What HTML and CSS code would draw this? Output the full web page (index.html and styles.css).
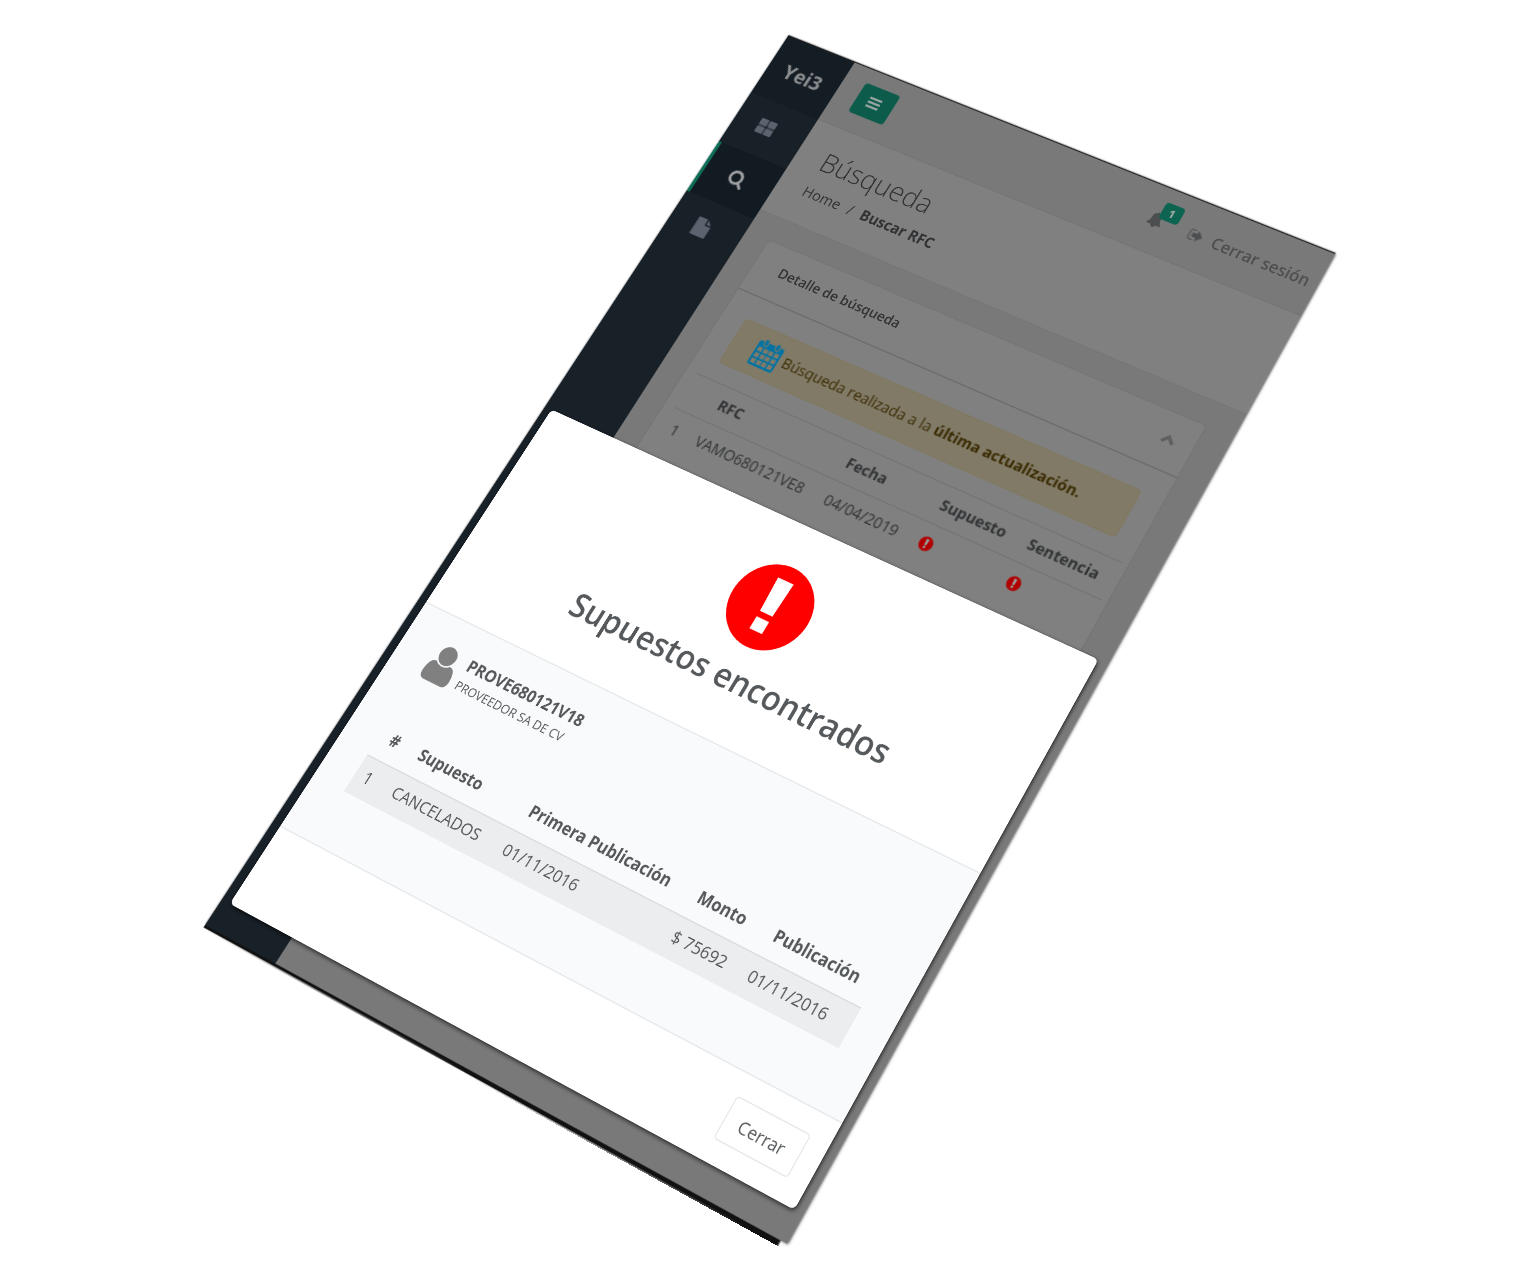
FILE: index.html
```html
<!DOCTYPE html>
<html lang="es">
<head>
<meta charset="utf-8">
<title>Yei3 - Búsqueda</title>
<link rel="stylesheet" href="styles.css">
</head>
<body>
<svg class="sprite" aria-hidden="true">
  <symbol id="i-alert" viewBox="0 0 72 72"><circle cx="36" cy="36" r="36"/><path class="mark" d="M28.500 12h15l-1.500 30h-12zM30 47h12v11h-12z"/></symbol>
  <symbol id="i-search" viewBox="0 0 1792 1792"><path d="M1216 832q0-185-131.500-316.500t-316.500-131.500-316.500 131.500-131.500 316.500 131.500 316.500 316.500 131.500 316.500-131.500 131.500-316.500zm512 832q0 52-38 90t-90 38q-54 0-90-38l-343-342q-179 124-399 124-143 0-273.500-55.500t-225-150-150-225-55.500-273.500 55.500-273.500 150-225 225-150 273.500-55.500 273.500 55.500 225 150 150 225 55.500 273.500q0 220-124 399l343 343q37 37 37 90z"/></symbol>
  <symbol id="i-file" viewBox="0 0 1792 1792"><path d="M1152 512v-472q22 14 36 28l408 408q14 14 28 36h-472zm-128 32q0 40 28 68t68 28h544v1056q0 40-28 68t-68 28h-1344q-40 0-68-28t-28-68v-1600q0-40 28-68t68-28h800v544z"/></symbol>
  <symbol id="i-grid" viewBox="0 0 18 18"><rect x="0" y="1" width="8" height="7" rx="1"/><rect x="9" y="1" width="8" height="7" rx="1"/><rect x="0" y="9" width="8" height="7" rx="1"/><rect x="9" y="9" width="8" height="7" rx="1"/></symbol>
  <symbol id="i-bars" viewBox="0 0 14 14"><path d="M1 2h12v2H1zM1 6h12v2H1zM1 10h12v2H1z"/></symbol>
  <symbol id="i-bell" viewBox="0 0 1792 1792"><path d="M1728 1408q0 52-38 90t-90 38h-448q0 106-75 181t-181 75-181-75-75-181h-448q-52 0-90-38t-38-90q50-42 91-88t85-119.500 74.500-158.500 50-206 19.500-260q0-152 117-282.500t307-158.500q-8-19-8-39 0-40 28-68t68-28 68 28 28 68q0 20-8 39 190 28 307 158.500t117 282.500q0 139 19.500 260t50 206 74.500 158.500 85 119.500 91 88z"/></symbol>
  <symbol id="i-exit" viewBox="0 0 1792 1792"><path d="M704 1440q0 4 1 20t.5 26.500-3 23.500-10 19.500-20.500 6.500h-320q-119 0-203.500-84.500t-84.500-203.500v-704q0-119 84.500-203.500t203.500-84.500h320q13 0 22.500 9.500t9.500 22.500q0 4 1 20t.5 26.500-3 23.500-10 19.500-20.500 6.500h-320q-66 0-113 47t-47 113v704q0 66 47 113t113 47h312l11.500 1 11.500 3 8 5.500 7 9 2 13.500zm928-544q0 26-19 45l-544 544q-19 19-45 19t-45-19-19-45v-288h-448q-26 0-45-19t-19-45v-384q0-26 19-45t45-19h448v-288q0-26 19-45t45-19 45 19l544 544q19 19 19 45z"/></symbol>
  <symbol id="i-user" viewBox="0 0 1792 1792"><path d="M1536 1399q0 109-62.500 187t-150.500 78h-854q-88 0-150.500-78t-62.500-187q0-85 8.500-160.500t31.500-152 58.500-131 94-89 134.500-34.500q131 128 313 128t313-128q76 0 134.500 34.500t94 89 58.500 131 31.500 152 8.500 160.500zm-256-887q0 159-112.500 271.500t-271.500 112.500-271.500-112.500-112.500-271.500 112.500-271.500 271.500-112.500 271.500 112.500 112.500 271.500z"/></symbol>
  <symbol id="i-calendar" viewBox="0 0 26 28"><path fill-rule="evenodd" d="M2 4h22a2 2 0 0 1 2 2v20a2 2 0 0 1-2 2H2a2 2 0 0 1-2-2V6a2 2 0 0 1 2-2zM2 10h4.500v4H2zM8 10h4.500v4H8zM13.500 10h4.500v4h-4.500zM19.500 10H24v4h-4.500zM2 15.500h4.500V20H2zM8 15.500h4.500V20H8zM13.500 15.500h4.500V20h-4.500zM19.500 15.500H24V20h-4.500zM2 21.500h4.500V26H2zM8 21.500h4.500V26H8zM13.500 21.500h4.500V26h-4.500zM19.500 21.500H24V26h-4.500z"/><rect x="5" y="1" width="4" height="7" rx="2" class="ring"/><rect x="17" y="1" width="4" height="7" rx="2" class="ring"/></symbol>
  <symbol id="i-up" viewBox="0 0 12 12"><path d="M1 9l5-5 5 5" class="stroke"/></symbol>
</svg>

<div class="stage">
  <div class="screen">
    <nav class="sidebar" aria-label="Principal">
      <div class="brand">Yei3</div>
      <a class="item" href="#inicio" aria-label="Inicio"><svg><use href="#i-grid"/></svg></a>
      <a class="item active" href="#buscar" aria-label="Buscar"><svg><use href="#i-search"/></svg></a>
      <a class="item" href="#docs" aria-label="Documentos"><svg><use href="#i-file"/></svg></a>
    </nav>
    <div class="page">
      <header class="topbar">
        <button class="toggle" type="button" aria-label="Menú"><svg><use href="#i-bars"/></svg></button>
        <div class="tools">
          <a class="bell" href="#avisos" aria-label="Avisos"><svg><use href="#i-bell"/></svg><span class="badge">1</span></a>
          <a class="logout" href="#salir"><svg><use href="#i-exit"/></svg>Cerrar sesión</a>
        </div>
      </header>
      <div class="heading">
        <h1>Búsqueda</h1>
        <div class="crumbs"><a href="#home">Home</a><span>/</span><strong>Buscar RFC</strong></div>
      </div>
      <main class="content">
        <section class="card">
          <div class="card-title"><h2>Detalle de búsqueda</h2><svg><use href="#i-up"/></svg></div>
          <div class="card-body">
            <div class="notice"><svg><use href="#i-calendar"/></svg><p>Búsqueda realizada a la <strong>última actualización.</strong></p></div>
            <table class="results">
              <colgroup><col class="r1"><col class="r2"><col class="r3"><col class="r4"><col></colgroup>
              <thead><tr><th></th><th>RFC</th><th>Fecha</th><th>Supuesto</th><th>Sentencia</th></tr></thead>
              <tbody><tr><td>1</td><td>VAMO680121VE8</td><td>04/04/2019</td><td><svg class="dot"><use href="#i-alert"/></svg></td><td><svg class="dot"><use href="#i-alert"/></svg></td></tr></tbody>
            </table>
          </div>
        </section>
      </main>
    </div>
  </div>

  <div class="modal" role="dialog" aria-labelledby="modal-title">
    <div class="modal-head">
      <svg><use href="#i-alert"/></svg>
      <h2 id="modal-title">Supuestos encontrados</h2>
    </div>
    <div class="modal-body">
      <div class="person">
        <svg><use href="#i-user"/></svg>
        <div><strong>PROVE680121V18</strong><small>PROVEEDOR SA DE CV</small></div>
      </div>
      <table class="found">
        <colgroup><col class="f1"><col class="f2"><col class="f3"><col class="f4"><col></colgroup>
        <thead><tr><th>#</th><th>Supuesto</th><th>Primera Publicación</th><th>Monto</th><th>Publicación</th></tr></thead>
        <tbody><tr><td>1</td><td>CANCELADOS</td><td>01/11/2016</td><td>$ 75692</td><td>01/11/2016</td></tr></tbody>
      </table>
    </div>
    <div class="modal-foot"><button type="button">Cerrar</button></div>
  </div>
</div>
</body>
</html>
```
FILE: styles.css
```css
* { box-sizing: border-box; }

body {
  margin: 0;
  background: #fff;
  font: 13px/20px "Open Sans", "Noto Sans", sans-serif;
  color: #303234;
}

h1, h2, p { margin: 0; }
a { color: inherit; text-decoration: none; }
svg { display: block; fill: currentColor; }
table { border-collapse: collapse; table-layout: fixed; }
th, td { text-align: left; padding: 0 8px; white-space: nowrap; }

.sprite { position: absolute; width: 0; height: 0; }
.mark { fill: var(--mark, #fff); }
.ring { fill: #0072a4; stroke: #807a67; stroke-width: 1; }
.stroke { fill: none; stroke: currentColor; stroke-width: 3; }

.stage {
  position: relative;
  min-height: 100vh;
  overflow: hidden;
}

/* The screen and the dialog are flat planes seen in perspective */
.screen, .modal {
  position: absolute;
  top: 0;
  left: 50%;
  transform-origin: 0 0;
}

.screen {
  display: flex;
  width: 535px;
  height: 840px;
  background: #797979;
  box-shadow: 0 -1px 1px #222, 1px 0 2px rgba(0, 0, 0, .5);
  transform: matrix3d(.955469, .377374, 0, -.000118514, -.613442, .926368, 0, -.000142665, 0, 0, 1, 0, 18, 36, 0, 1);
}

.screen::after {
  content: "";
  position: absolute;
  top: 100%;
  left: 0;
  width: 99%;
  height: 4px;
  background: #111;
  clip-path: polygon(0 0, 100% 0, 100% 100%, 0 50%);
}

.sidebar { width: 69px; background: #182028; color: #5c626e; }
.brand {
  height: 60px;
  background: #141c24;
  color: #8c8e90;
  font-size: 18px;
  font-weight: 700;
  line-height: 60px;
  text-align: center;
}
.item { display: flex; height: 51px; align-items: center; padding: 0 0 2px 23px; }
.item svg { width: 17px; height: 17px; }
.item.active {
  background: #131b22;
  border-left: 3px solid #0d6e58;
  color: #a0a2a4;
}

.page { flex: 1; }
.topbar {
  display: flex;
  justify-content: space-between;
  height: 60px;
  padding: 13px 8px 0 20px;
  border-bottom: 1px solid #737475;
}
.toggle {
  width: 35px;
  height: 30px;
  padding: 8px 10px;
  border: 0;
  border-radius: 3px;
  background: #0d5c4b;
  color: #9aa5a2;
}
.toggle svg { width: 14px; height: 14px; }
.tools { display: flex; gap: 24px; color: #4c4e50; font-weight: 600; line-height: 34px; }
.bell { position: relative; padding-top: 10px; }
.bell svg { width: 14px; height: 14px; }
.badge {
  position: absolute;
  top: -1px;
  left: 8px;
  padding: 0 6px;
  border-radius: 3px;
  background: #0d6450;
  color: #a0aaa6;
  font-size: 10px;
  font-weight: 700;
  line-height: 16px;
}
.logout { display: flex; align-items: center; gap: 8px; height: 34px; font-size: 14px; }
.logout svg { width: 14px; height: 14px; }

.heading {
  height: 93px;
  padding: 16px 25px 0;
  background: #808080;
  border-bottom: 1px solid #757677;
}
.heading h1 { font-size: 24px; font-weight: 300; line-height: 32px; }
.crumbs { display: flex; gap: 8px; line-height: 18px; padding-top: 5px; }

.content { padding: 20px 24px 0 22px; }
.card { height: 300px; background: #808080; border: 1px solid #747576; border-radius: 4px; }
.card-title {
  display: flex;
  justify-content: space-between;
  align-items: center;
  height: 48px;
  padding: 0 16px 4px 24px;
  border-bottom: 1px solid #696a6b;
}
.card-title h2 { font-size: 12px; font-weight: 600; line-height: 20px; }
.card-title svg { width: 12px; height: 12px; color: #606162; }
.notice {
  display: flex;
  align-items: center;
  gap: 4px;
  height: 43px;
  margin: 20px 20px 15px 21px;
  padding: 0 0 2px 21px;
  border: 1px solid #80785f;
  border-radius: 4px;
  background: #807a67;
  color: #3a2b02;
}
.notice svg { width: 24px; height: 26px; color: #0072a4; }

.results { width: 404px; margin-left: 9px; }
.results th { height: 33px; padding-bottom: 3px; border-top: 1px solid #737475; border-bottom: 1px solid #737475; }
.results td { height: 34px; padding-bottom: 2px; }
.r1 { width: 25px; }
.r2 { width: 125px; }
.r3 { width: 89px; }
.r4 { width: 81px; }
.dot { --mark: #999; width: 12px; height: 12px; color: #b00000; }

.modal {
  width: 515px;
  min-height: 441px;
  overflow: clip;
  border-radius: 4px;
  background: #fff;
  color: #56595b;
  transform: matrix3d(1.020553, .401957, 0, -.00012658, -.647092, .982744, 0, -.00014977, 0, 0, 1, 0, -218.5, 409.5, 0, 1);
  box-shadow: 1px 1px 3px rgba(0, 0, 0, .7);
}
.modal-head {
  display: flex;
  flex-direction: column;
  align-items: center;
  gap: 8px;
  height: 179px;
  padding-top: 34px;
}
.modal-head svg { width: 70px; height: 70px; color: #f00; }
.modal-head h2 { font-size: 26px; font-weight: 600; line-height: 36px; }
.modal-body {
  height: 198px;
  padding: 19px 30px 0;
  border: solid #e7eaec;
  border-width: 1px 0;
  background: #f8fafc;
}
.person { display: flex; gap: 8px; height: 74px; }
.person > svg { width: 36px; height: 36px; margin: 0 -7px 0 -5px; color: #808080; }
.person div { display: flex; flex-direction: column; }
.person strong { font-weight: 700; line-height: 18px; }
.person small { font-size: 10px; line-height: 16px; }
.found { width: 455px; }
.found th { height: 28px; padding: 0 6px 7px 10px; border-bottom: 1px solid #ddd; }
.found td { height: 32px; padding-bottom: 2px; background: #ebedee; }
.f1 { width: 28px; }
.f2 { width: 106px; }
.f3 { width: 156px; }
.f4 { width: 68px; }
.modal-foot { display: flex; justify-content: flex-end; padding: 16px; }
.modal-foot button {
  width: 64px;
  height: 33px;
  border: 1px solid #e7eaec;
  border-radius: 3px;
  background: #fff;
  color: inherit;
  font: inherit;
}
```
